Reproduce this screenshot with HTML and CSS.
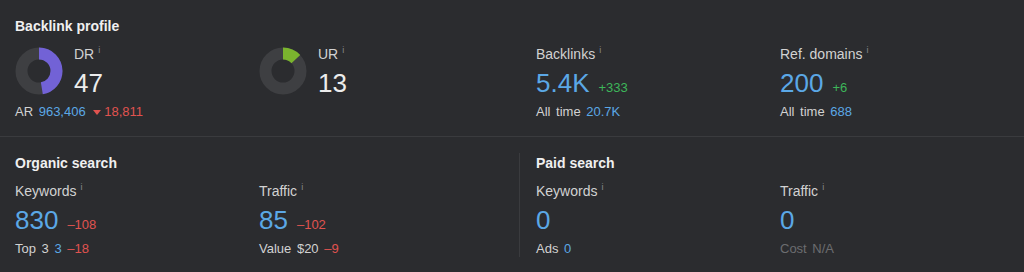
FILE: index.html
```html
<!DOCTYPE html>
<html lang="en">
<head>
  <meta charset="UTF-8">
  <title>Overview</title>
  <link rel="stylesheet" href="styles.css">
</head>
<body>
  <!-- Backlink profile -->
  <section class="section section-top">
    <div class="half">
      <h2 class="title">Backlink profile</h2>
      <div class="cols">
        <div class="stat">
          <div class="rating">
            <svg class="donut" width="48" height="48" viewBox="0 0 48 48">
              <circle cx="24" cy="24" r="17.5" fill="none" stroke="#3e3f42" stroke-width="12"/>
              <circle cx="24" cy="24" r="17.5" fill="none" stroke="#7262d6" stroke-width="12"
                      stroke-dasharray="51.7 110" transform="rotate(-90 24 24)"/>
            </svg>
            <div>
              <div class="label">DR<span class="info">i</span></div>
              <div class="value white">47</div>
            </div>
          </div>
          <div class="sub">AR <span class="blue">963,406</span> <span class="red"><span class="tri"></span>18,811</span></div>
        </div>
        <div class="stat">
          <div class="rating">
            <svg class="donut" width="48" height="48" viewBox="0 0 48 48">
              <circle cx="24" cy="24" r="17.5" fill="none" stroke="#3e3f42" stroke-width="12"/>
              <circle cx="24" cy="24" r="17.5" fill="none" stroke="#7ab42e" stroke-width="12"
                      stroke-dasharray="14.3 110" transform="rotate(-90 24 24)"/>
            </svg>
            <div>
              <div class="label">UR<span class="info">i</span></div>
              <div class="value white">13</div>
            </div>
          </div>
        </div>
      </div>
    </div>
    <div class="half half-right">
      <div class="title-spacer"></div>
      <div class="cols">
        <div class="stat">
          <div class="label">Backlinks<span class="info">i</span></div>
          <div class="value blue">5.4K<span class="delta green">+333</span></div>
          <div class="sub">All time <span class="blue">20.7K</span></div>
        </div>
        <div class="stat">
          <div class="label">Ref. domains<span class="info">i</span></div>
          <div class="value blue">200<span class="delta green">+6</span></div>
          <div class="sub">All time <span class="blue">688</span></div>
        </div>
      </div>
    </div>
  </section>

  <!-- Organic / Paid search -->
  <section class="section section-bottom">
    <div class="half">
      <h2 class="title">Organic search</h2>
      <div class="cols">
        <div class="stat">
          <div class="label">Keywords<span class="info">i</span></div>
          <div class="value blue">830<span class="delta red">–108</span></div>
          <div class="sub">Top 3 <span class="blue">3</span> <span class="red">–18</span></div>
        </div>
        <div class="stat">
          <div class="label">Traffic<span class="info">i</span></div>
          <div class="value blue">85<span class="delta red">–102</span></div>
          <div class="sub">Value <span>$20</span> <span class="red">–9</span></div>
        </div>
      </div>
    </div>
    <div class="half half-right">
      <h2 class="title">Paid search</h2>
      <div class="cols">
        <div class="stat">
          <div class="label">Keywords<span class="info">i</span></div>
          <div class="value blue">0</div>
          <div class="sub">Ads <span class="blue">0</span></div>
        </div>
        <div class="stat">
          <div class="label">Traffic<span class="info">i</span></div>
          <div class="value blue">0</div>
          <div class="sub muted">Cost <span>N/A</span></div>
        </div>
      </div>
    </div>
  </section>
</body>
</html>
```

FILE: styles.css
```css
* {
  box-sizing: border-box;
  margin: 0;
  padding: 0;
}
body {
  font-family: "Liberation Sans", Arial, sans-serif;
  background-color: #2b2c2f;
  color: #d2d2d2;
  width: 1024px;
  height: 272px;
  overflow: hidden;
}
.section {
  display: flex;
}
.section-top {
  padding: 18px 0 16px;
  border-bottom: 1px solid #3a3b3e;
}
.section-bottom {
  padding: 16px 0 15px;
}
.half {
  width: 519px;
  padding-left: 15px;
}
.section-bottom .half {
  padding-top: 2px;
}
.half-right {
  width: 505px;
  padding-left: 16px;
  border-left: 1px solid transparent;
}
.section-bottom .half-right {
  border-left-color: #3a3b3e;
}
.title {
  font-size: 14px;
  line-height: 16px;
  font-weight: bold;
  color: #f0f0f0;
  margin-bottom: 12px;
}
.title-spacer {
  height: 16px;
  margin-bottom: 12px;
}
.cols {
  display: grid;
  grid-template-columns: 244px 244px;
}
.label {
  font-size: 14px;
  line-height: 16px;
  height: 16px;
  color: #d2d2d2;
}
.info {
  font-size: 9px;
  line-height: 1;
  color: #8a8b8e;
  margin-left: 4px;
  vertical-align: 6px;
}
.value {
  font-size: 26px;
  line-height: 30px;
  height: 30px;
  margin-top: 6px;
}
.delta {
  font-size: 13px;
  line-height: 1;
  margin-left: 9px;
}
.sub {
  font-size: 13px;
  line-height: 16px;
  height: 16px;
  margin-top: 6px;
  word-spacing: 2px;
}
.rating {
  display: flex;
  align-items: flex-start;
}
.donut {
  margin-top: 1px;
  margin-right: 11px;
  flex-shrink: 0;
}
.tri {
  display: inline-block;
  width: 0;
  height: 0;
  border-left: 4px solid transparent;
  border-right: 4px solid transparent;
  border-top: 5px solid #e0534f;
  margin: 0 3px 1px 2px;
}
.white { color: #ececec; }
.blue { color: #5ba8e6; }
.green { color: #3db65a; }
.red { color: #e0534f; }
.muted { color: #6c6d70; }
```
